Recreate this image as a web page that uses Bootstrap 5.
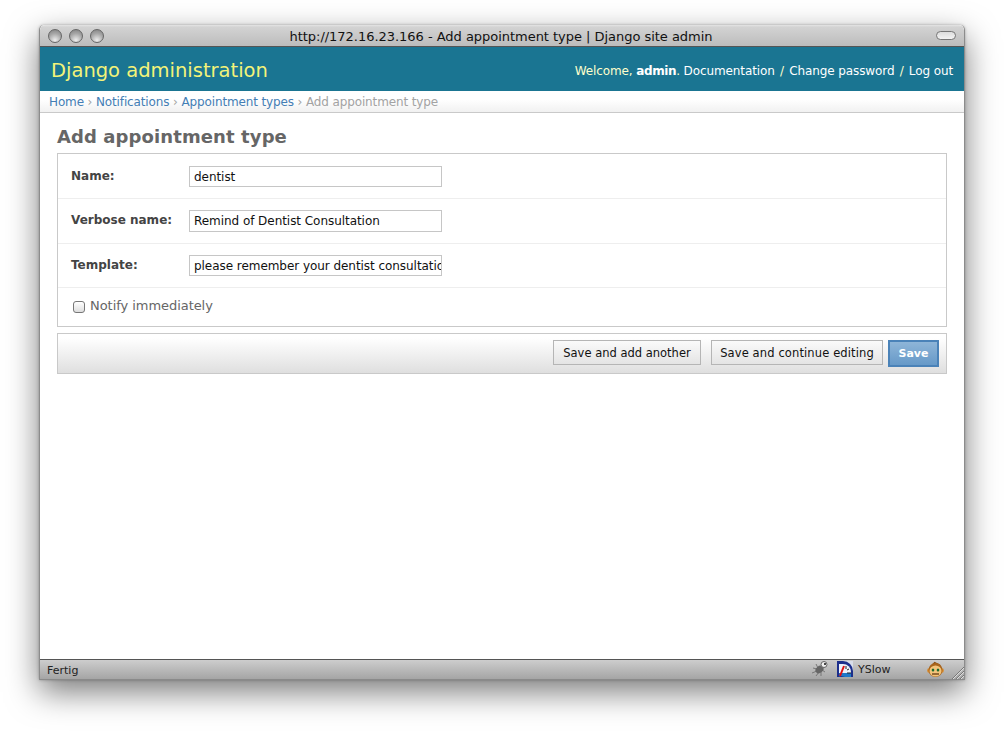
<!DOCTYPE html>
<html lang="en">
<head>
<meta charset="utf-8">
<title>Add appointment type | Django site admin</title>
<link href="https://cdn.jsdelivr.net/npm/bootstrap@5.3.0/dist/css/bootstrap.min.css" rel="stylesheet">
<style>
html,body{height:734px;overflow:hidden;background:#fff}
body{font-family:"DejaVu Sans","Liberation Sans",sans-serif;padding:25px 39px 54px;color:#333;font-size:12px;line-height:1.2}
.win{height:655px;width:926px;border-radius:5px 5px 0 0;box-shadow:0 12px 32px rgba(0,0,0,.52),0 0 3px rgba(0,0,0,.3);background:#fff;border-left:1px solid #8c8c8c;border-right:1px solid #8c8c8c;overflow:hidden}
.titlebar{height:22px;background:linear-gradient(#e4e4e4 0,#d3d3d3 2px,#bcbcbc 100%);border-bottom:1px solid #555;border-radius:5px 5px 0 0;position:relative;padding:0 8px;gap:7px}
.light{width:14px;height:14px;border-radius:50%;border:1px solid #666;background:radial-gradient(circle at 50% 85%,#eee 0,#a8a8a8 55%,#7f7f7f 100%)}
.wtitle{font-size:13px;color:#111;position:absolute;left:0;right:2px;top:4px;text-align:center;letter-spacing:-.03px}
.pill{width:20px;height:9px;border:1px solid #777;border-radius:5px;background:linear-gradient(#ddd,#f3f3f3);margin-left:auto}
.djhead{height:44px;background:#1a7592;padding:4px 11px 0;color:#f5dd5d}
.djbrand{font-size:19.5px;color:#f4f379}
.djuser{font-size:12px;color:#ffffcc;letter-spacing:-.1px}
.djuser a{color:#fff;text-decoration:none}
.djuser strong{letter-spacing:-.4px}
.sepa{margin:0 1.5px}
.crumbs{height:22px;background:linear-gradient(#fff 40%,#f1f1f1);border-bottom:1px solid #c9c9c9;padding:4px 9px 0;font-size:12px;color:#a3a3a3;letter-spacing:-.13px}
.crumbs a{color:#447eb5;text-decoration:none}
.pagebody{flex:1;padding:0 17px;background:#fff}
.ptitle{font-size:18px;font-weight:700;color:#666;margin:12px 0 0;height:28px;line-height:24px;letter-spacing:.1px}
.fset{border:1px solid #c9c9c9;height:174px}
.frow{padding:0 13px;border-bottom:1px solid #eee}
.fr1{height:45px;padding-top:12px}.fr2{height:45px;padding-top:11px}.fr3{height:44px;padding-top:11px}
.frow label{width:118px;font-weight:700;font-size:12px;color:#444;margin-top:3px}
.txt{width:253px;height:21px;border:1px solid #c6c6c6;padding:1px 0 1px 4px;font:12px "DejaVu Sans",sans-serif;color:#111;letter-spacing:-.05px;outline:0;background:#fff;border-radius:0}
.fr2 .txt{height:22px}
.chkrow{padding:10px 15px 0;font-size:13px;color:#666;gap:5px;letter-spacing:-.05px}
.chk{width:12px;height:12px;border:1px solid #777;border-radius:3px;background:linear-gradient(#fff,#ddd);margin-top:3px}
.actions{margin-top:6px;height:41px;border:1px solid #c9c9c9;background:linear-gradient(#fff 10%,#dfdfdf);padding:6px 7px 0 0;gap:10px}
.dbtn{height:25px;padding:0;font:11.5px "DejaVu Sans",sans-serif;color:#111;background:linear-gradient(#fafafa,#e4e4e4);border:1px solid #b5b5b5;border-radius:0;white-space:nowrap}
.dbtn.w1{width:148px}.dbtn.w2{width:172px;letter-spacing:.12px}
.dbtn.prim{width:51px;height:27px;margin-left:-5px;background:linear-gradient(#8eb5d8,#6699c8);border:2px solid #4a82b8;color:#fff;font-weight:700;padding:0;font-size:11px}
.status{height:21px;background:linear-gradient(#cdcdcd,#a5a5a5);border-top:1px solid #555;border-bottom:1px solid #8a8a8a;padding:4px 7px 0;font-size:11px;color:#222;position:relative}
.sicons{margin-left:auto;height:18px;margin-top:-4px}
.yslowtxt{width:70px;padding:2px 0 0 1px}
.grip{position:absolute;right:0;bottom:0}
</style>
</head>
<body>
<div class="win d-flex flex-column">
  <div class="titlebar d-flex align-items-center">
    <div class="light"></div><div class="light"></div><div class="light"></div>
    <div class="wtitle">http://172.16.23.166 - Add appointment type | Django site admin</div>
    <div class="pill"></div>
  </div>
  <div class="djhead d-flex align-items-center justify-content-between">
    <div class="djbrand">Django administration</div>
    <div class="djuser">Welcome, <strong class="text-white">admin</strong>. <a href="#">Documentation</a> <span class="sepa">/</span> <a href="#">Change password</a> <span class="sepa">/</span> <a href="#">Log out</a></div>
  </div>
  <div class="crumbs"><a href="#">Home</a> › <a href="#">Notifications</a> › <a href="#">Appointment types</a> › Add appointment type</div>
  <div class="pagebody">
    <h1 class="ptitle">Add appointment type</h1>
    <div class="fset">
      <div class="frow fr1 d-flex align-items-start"><label>Name:</label><input class="txt" value="dentist"></div>
      <div class="frow fr2 d-flex align-items-start"><label>Verbose name:</label><input class="txt" value="Remind of Dentist Consultation"></div>
      <div class="frow fr3 d-flex align-items-start"><label>Template:</label><input class="txt" value="please remember your dentist consultation"></div>
      <div class="chkrow d-flex align-items-start"><span class="chk"></span><span>Notify immediately</span></div>
    </div>
    <div class="actions d-flex justify-content-end align-items-start">
      <button class="dbtn w1">Save and add another</button>
      <button class="dbtn w2">Save and continue editing</button>
      <button class="dbtn prim">Save</button>
    </div>
  </div>
  <div class="status d-flex align-items-start">
    <span>Fertig</span>
    <div class="sicons d-flex align-items-center">
      <svg width="18" height="18" viewBox="0 0 18 18" class="me-2"><g stroke="#777" stroke-width="1" fill="none"><path d="M5 4l2 4M2 8l4 1M1 13l5-2M5 16l3-4M10 16l0-4M14 12l-3-2"/></g><ellipse cx="8.5" cy="9.5" rx="4.4" ry="3.4" fill="#666" transform="rotate(-40 8.5 9.5)"/><circle cx="13" cy="4.5" r="3" fill="#eee" stroke="#666"/><circle cx="14" cy="4" r="1" fill="#111"/></svg>
      <svg width="16" height="16" viewBox="0 0 16 16"><rect width="16" height="16" fill="#d9deea"/><path d="M0 16V0h6a10 10 0 0 1 10 10v6z" fill="#1c2f8c"/><path d="M2 16V3h4a8 8 0 0 1 8 8v5z" fill="#eef2fb"/><path d="M2 16v-4h12v4z" fill="#1f78c8"/><path d="M0 16l4-1 4 1z" fill="#1c2f8c"/><path d="M3 15l4-10" stroke="#e01010" stroke-width="2"/><path d="M9 5v3M12 8l-2 1M14 12h-4" stroke="#222"/></svg>
      <span class="ms-1 yslowtxt">YSlow</span>
      <svg width="17" height="17" viewBox="0 0 17 17" style="margin-right:13px"><path d="M5 3.5L7.5.8 10 2l3 1.5 1 3L3 6z" fill="#8a4f14"/><ellipse cx="1.8" cy="9.5" rx="1.6" ry="2.2" fill="#d98a2c"/><ellipse cx="15.2" cy="9.5" rx="1.6" ry="2.2" fill="#d98a2c"/><circle cx="8.5" cy="9" r="7" fill="#a8641c"/><ellipse cx="8.5" cy="10" rx="6" ry="5.6" fill="#f3c47a"/><ellipse cx="6" cy="9" rx="1.3" ry="1.6" fill="#1d6b2e"/><ellipse cx="11" cy="9" rx="1.3" ry="1.6" fill="#1d6b2e"/><path d="M5 13h7" stroke="#5a3008" stroke-width="1.2"/></svg>
    </div>
    <svg class="grip" width="13" height="13" viewBox="0 0 13 13"><path d="M1 13L13 1M5 13l8-8M9 13l4-4" stroke="#777" fill="none"/><path d="M2 13L13 2M6 13l7-7M10 13l3-3" stroke="#ddd" fill="none"/></svg>
  </div>
</div>
<script src="https://cdn.jsdelivr.net/npm/bootstrap@5.3.0/dist/js/bootstrap.bundle.min.js"></script>
</body>
</html>
